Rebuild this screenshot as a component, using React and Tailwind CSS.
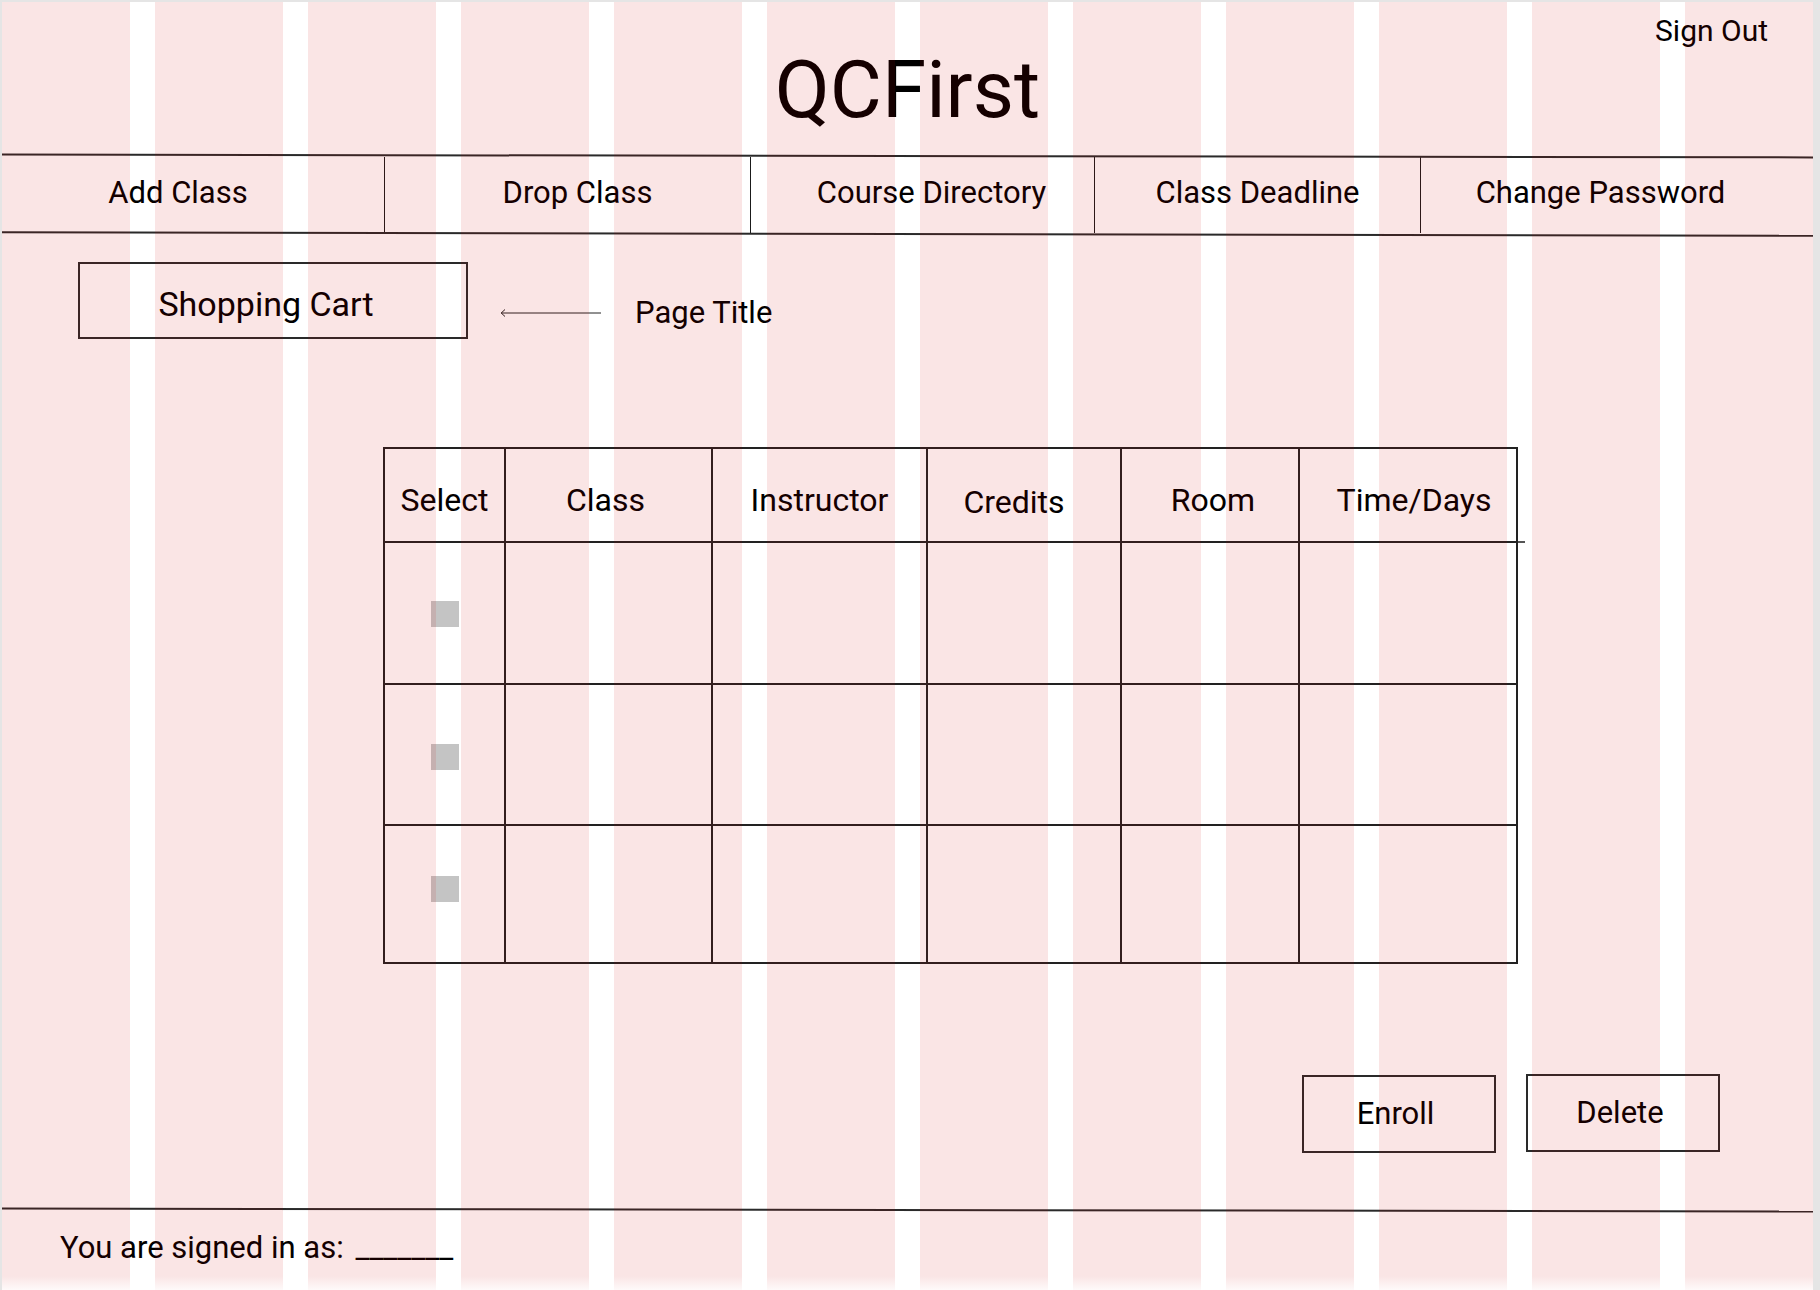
import React from 'react';

const navItems = [
  { label: 'Add Class', cell: 'w-[382px] pr-[30px]' },
  { label: 'Drop Class', cell: 'w-[366px] pl-[20px] border-l border-[#1a1a1a]' },
  { label: 'Course Directory', cell: 'w-[344px] pl-[18px] border-l border-[#1a1a1a]' },
  { label: 'Class Deadline', cell: 'w-[326px] border-l border-[#1a1a1a]' },
  { label: 'Change Password', cell: 'flex-1 pr-[33px] border-l border-[#1a1a1a]' },
];

const columns = [
  { label: 'Select', cell: 'pt-[35px]' },
  { label: 'Class', cell: 'pt-[35px] pr-[6px]' },
  { label: 'Instructor', cell: 'pt-[35px]' },
  { label: 'Credits', cell: 'pt-[37px] pr-[20px]' },
  { label: 'Room', cell: 'pt-[35px] pl-[6px]' },
  { label: 'Time/Days', cell: 'pt-[35px] pl-[12px]' },
];

const rows = [
  { box: 'mt-[2px]' },
  { box: 'mt-[5px]' },
  { box: '-mt-[10px]' },
];

export default function App() {
  return (
    <div className="w-[1820px] h-[1290px] bg-[#e5e5e5] pt-[2px] pl-[2px] overflow-hidden font-[Roboto,sans-serif] text-black">
      <div className="relative w-[1811px] h-[1288px] bg-white flex flex-col">
        {/* header */}
        <div className="grid grid-cols-[1fr_auto_1fr] h-[153px]">
          <div></div>
          <h1 className="mt-[48px] text-[80px] leading-none">QCFirst</h1>
          <div className="flex justify-end">
            <button className="mt-[14px] mr-[45px] h-fit text-[30px] leading-none">Sign Out</button>
          </div>
        </div>

        {/* nav */}
        <div className="h-[2px] bg-[#2a2a2a] rotate-[0.09deg]"></div>
        <div className="flex h-[76px]">
          {navItems.map((item) => (
            <div key={item.label} className={`flex justify-center items-start pt-[20px] ${item.cell}`}>
              <span className="text-[31px] leading-none">{item.label}</span>
            </div>
          ))}
        </div>
        <div className="h-[2px] bg-[#2a2a2a] rotate-[0.11deg]"></div>

        {/* page title */}
        <div className="flex items-start mt-[27px] ml-[76px]">
          <div className="w-[390px] h-[77px] border-2 border-[#2a2a2a] flex justify-center pt-[23px] pr-[14px]">
            <span className="text-[34px] leading-none">Shopping Cart</span>
          </div>
          <svg className="mt-[46px] ml-[32px]" width="101" height="10" viewBox="0 0 101 10" fill="none">
            <path d="M1 5 H101" stroke="#222" strokeWidth="1" />
            <path d="M5 1.5 L1.2 5 L5 8.5" stroke="#222" strokeWidth="1" />
          </svg>
          <span className="mt-[35px] ml-[34px] text-[31px] leading-none">Page Title</span>
        </div>

        {/* table */}
        <div className="relative mt-[108px] ml-[381px] w-fit grid grid-cols-[121px_207px_215px_194px_178px_218px] grid-rows-[94px_142px_141px_138px] border-l-2 border-t-2 border-[#222]">
          {columns.map((col) => (
            <div key={col.label} className={`flex justify-center items-start border-r-2 border-b-2 border-[#222] ${col.cell}`}>
              <span className="text-[32px] leading-none">{col.label}</span>
            </div>
          ))}
          {rows.map((row, i) => (
            <React.Fragment key={i}>
              <div className="flex items-center justify-center border-r-2 border-b-2 border-[#222]">
                <div className={`w-[28px] h-[26px] bg-[#c4c4c4] ${row.box}`}></div>
              </div>
              {columns.slice(1).map((col) => (
                <div key={col.label} className="border-r-2 border-b-2 border-[#222]"></div>
              ))}
            </React.Fragment>
          ))}
          <span className="absolute top-[92px] -right-[7px] w-[7px] h-[2px] bg-[#555]"></span>
        </div>

        {/* actions */}
        <div className="flex justify-end items-start gap-[30px] mt-[111px] mr-[93px]">
          <button className="w-[194px] h-[78px] border-2 border-[#2a2a2a] flex justify-center items-start pt-[21px] pr-[7px]">
            <span className="text-[31px] leading-none">Enroll</span>
          </button>
          <button className="-mt-[1px] w-[194px] h-[78px] border-2 border-[#2a2a2a] flex justify-center items-start pt-[21px] pr-[6px]">
            <span className="text-[31px] leading-none">Delete</span>
          </button>
        </div>

        {/* footer */}
        <div className="mt-[56px] h-[2px] bg-[#2a2a2a] rotate-[0.095deg]"></div>
        <p className="mt-[21px] pl-[58px] text-[31px] leading-none">
          You are signed in as: <span className="ml-[4px]">_______</span>
        </p>

        {/* layout grid overlay */}
        <div className="absolute inset-0 z-10 grid grid-cols-12 gap-x-[25px] pointer-events-none">
          {Array.from({ length: 12 }).map((_, i) => (
            <div key={i} className="bg-[rgba(205,0,0,0.1)]"></div>
          ))}
        </div>
        <div className="absolute bottom-0 left-0 right-0 z-20 h-[14px] bg-linear-to-b from-transparent to-white/80 pointer-events-none"></div>
      </div>
    </div>
  );
}
